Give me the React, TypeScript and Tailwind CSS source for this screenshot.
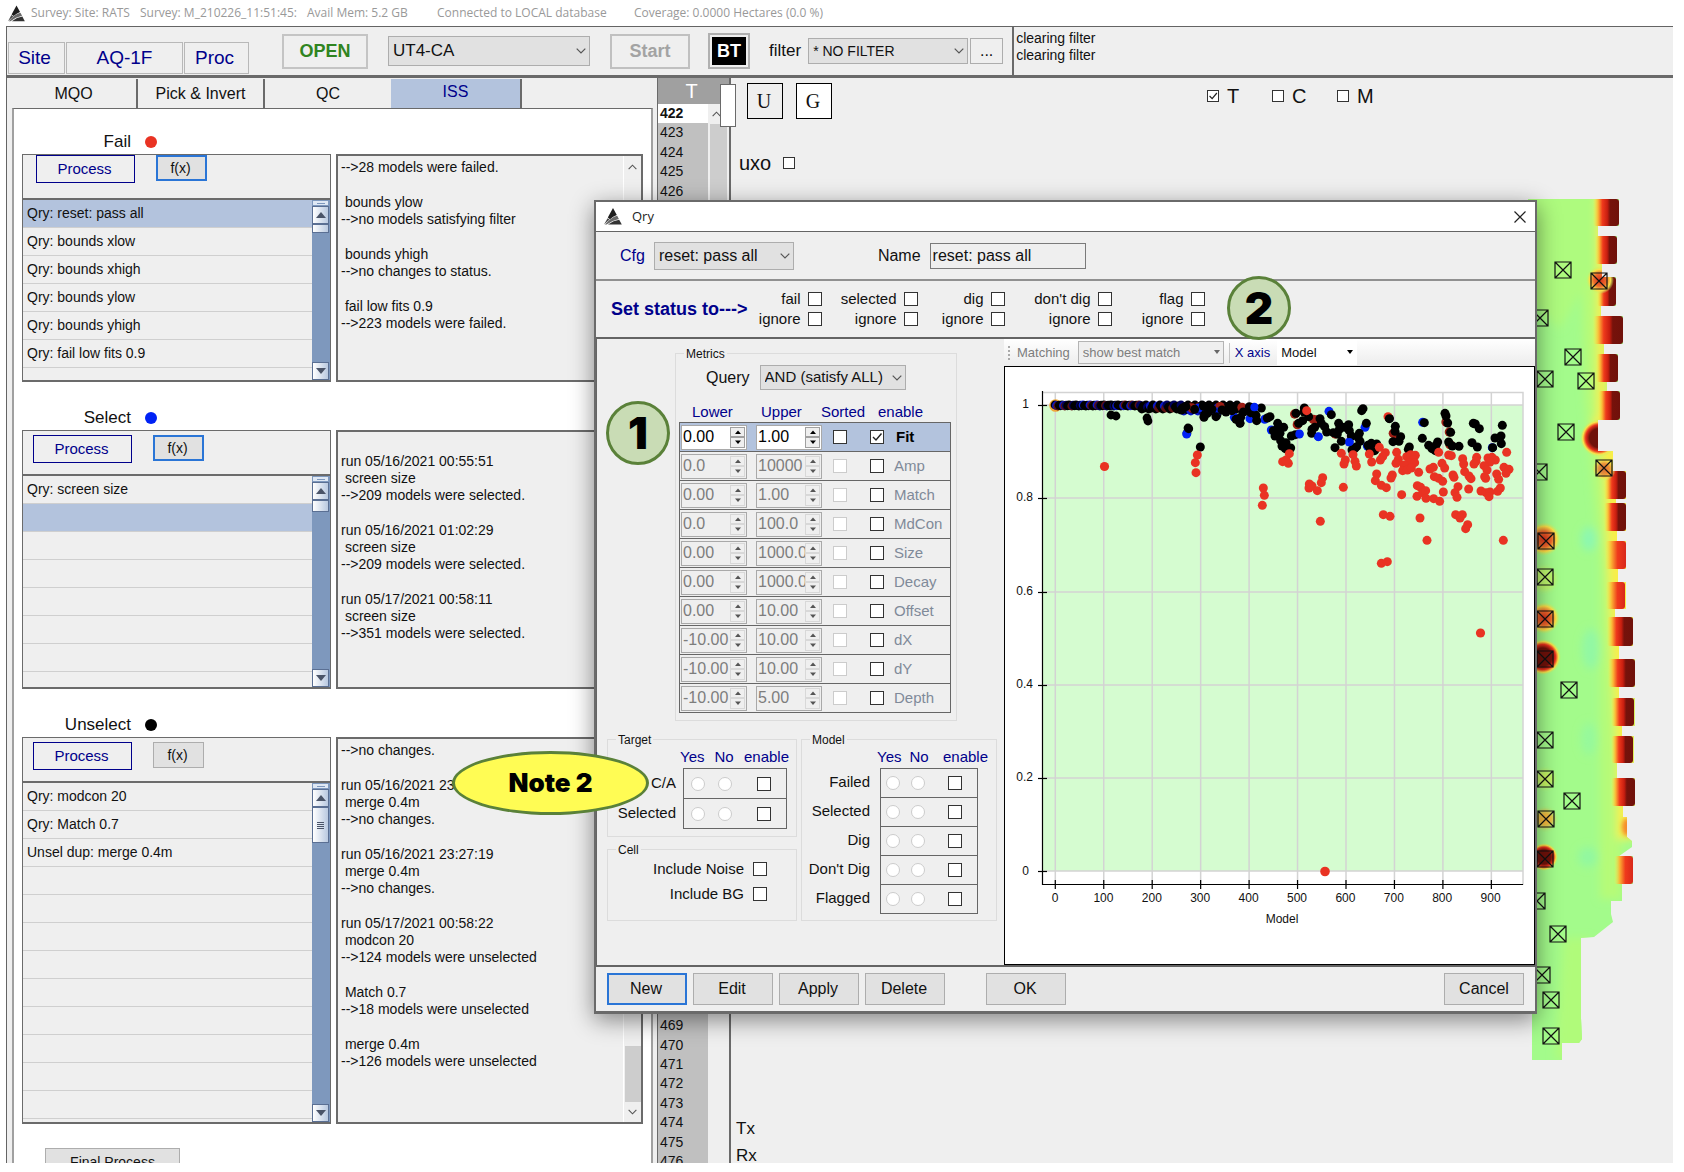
import { type ReactNode } from 'react';

interface QueryPanelProps {
  title: string;
  dotClass: string;
  heightClass: string;
  headerClass: string;
  fxClass: string;
  rows: string[];
  selected: number;
  thumbClass: string;
  grip?: boolean;
  log: string[];
  logTop?: boolean;
  logBottom?: boolean;
}

const failLog = [
  '-->28 models were failed.',
  '',
  ' bounds ylow',
  '-->no models satisfying filter',
  '',
  ' bounds yhigh',
  '-->no changes to status.',
  '',
  ' fail low fits 0.9',
  '-->223 models were failed.',
];

const selectLog = [
  '',
  'run 05/16/2021 00:55:51',
  ' screen size',
  '-->209 models were selected.',
  '',
  'run 05/16/2021 01:02:29',
  ' screen size',
  '-->209 models were selected.',
  '',
  'run 05/17/2021 00:58:11',
  ' screen size',
  '-->351 models were selected.',
];

const unselectLog = [
  '-->no changes.',
  '',
  'run 05/16/2021 23:21:04',
  ' merge 0.4m',
  '-->no changes.',
  '',
  'run 05/16/2021 23:27:19',
  ' merge 0.4m',
  '-->no changes.',
  '',
  'run 05/17/2021 00:58:22',
  ' modcon 20',
  '-->124 models were unselected',
  '',
  ' Match 0.7',
  '-->18 models were unselected',
  '',
  ' merge 0.4m',
  '-->126 models were unselected',
];

const panels: QueryPanelProps[] = [
  {
    title: 'Fail',
    dotClass: 'bg-[#e93323]',
    heightClass: 'h-[228px]',
    headerClass: 'pl-[13px]',
    fxClass: 'border-2 border-[#2a75d6]',
    rows: ['Qry: reset: pass all', 'Qry: bounds xlow', 'Qry: bounds xhigh', 'Qry: bounds ylow', 'Qry: bounds yhigh', 'Qry: fail low fits 0.9', ''],
    selected: 0,
    thumbClass: 'h-[9px]',
    log: failLog,
    logTop: true,
  },
  {
    title: 'Select',
    dotClass: 'bg-[#0022f5]',
    heightClass: 'h-[259px]',
    headerClass: 'pl-[10px] pt-1',
    fxClass: 'border-2 border-[#2a75d6]',
    rows: ['Qry: screen size', '', '', '', '', '', '', ''],
    selected: 1,
    thumbClass: 'h-3',
    log: selectLog,
  },
  {
    title: 'Unselect',
    dotClass: 'bg-black',
    heightClass: 'h-[387px]',
    headerClass: 'pl-[10px] pt-1',
    fxClass: 'border border-[#adadad]',
    rows: ['Qry: modcon 20', 'Qry: Match 0.7', 'Unsel dup: merge 0.4m', '', '', '', '', '', '', '', '', '', ''],
    selected: -1,
    thumbClass: 'h-9',
    grip: true,
    log: unselectLog,
    logBottom: true,
  },
];

const metrics = [
  { name: 'Fit', lower: '0.00', upper: '1.00', on: true },
  { name: 'Amp', lower: '0.0', upper: '10000', on: false },
  { name: 'Match', lower: '0.00', upper: '1.00', on: false },
  { name: 'MdCon', lower: '0.0', upper: '100.0', on: false },
  { name: 'Size', lower: '0.00', upper: '1000.0', on: false },
  { name: 'Decay', lower: '0.00', upper: '1000.0', on: false },
  { name: 'Offset', lower: '0.00', upper: '10.00', on: false },
  { name: 'dX', lower: '-10.00', upper: '10.00', on: false },
  { name: 'dY', lower: '-10.00', upper: '10.00', on: false },
  { name: 'Depth', lower: '-10.00', upper: '5.00', on: false },
];

const channels = Array.from({ length: 55 }, (_, i) => 422 + i);

// Scatter points, three units to a pixel
const redPoints = [
  [52, 225], [46, 248], [48, 278], [250, 324], [253, 346], [247, 376], [328, 221], [308, 245], [325, 250], [318, 240],
  [388, 312], [387, 324], [396, 318], [412, 332], [424, 308], [428, 293], [421, 424], [380, 92], [484, 220], [496, 240],
  [492, 252], [490, 322], [519, 224], [525, 244], [529, 258], [568, 222], [575, 246], [598, 202], [590, 282], [586, 302],
  [616, 218], [608, 230], [601, 240], [604, 316], [619, 323], [610, 404], [630, 409], [604, 550], [622, 545], [624, 110],
  [637, 285], [633, 294], [650, 217], [655, 238], [648, 250], [665, 344], [680, 230], [692, 224], [706, 226], [700, 240],
  [688, 248], [704, 248], [672, 255], [668, 272], [682, 270], [694, 264], [716, 277], [712, 317], [722, 322], [711, 349],
  [728, 338], [737, 332], [738, 355], [720, 414], [741, 481], [776, 217], [750, 267], [760, 262], [763, 290], [776, 295],
  [788, 304], [786, 250], [794, 264], [761, 356], [779, 364], [790, 336], [806, 225], [814, 227], [819, 285], [822, 292],
  [834, 320], [825, 338], [831, 352], [827, 404], [847, 404], [840, 414], [863, 434], [857, 446], [848, 236], [851, 252],
  [854, 275], [867, 288], [873, 296], [866, 327], [890, 232], [888, 244], [882, 252], [924, 234], [936, 232], [946, 240],
  [930, 246], [912, 257], [921, 270], [914, 290], [917, 295], [903, 333], [918, 338], [930, 336], [927, 350], [950, 282],
  [956, 298], [961, 324], [953, 334], [980, 217], [972, 262], [987, 268], [978, 280], [970, 481],
];

const bluePoints = [
  [20, 162], [223, 82], [210, 116], [178, 122], [254, 118], [274, 150], [358, 162], [415, 170], [447, 94], [555, 142],
  [508, 186], [728, 127], [937, 203], [56, 84], [110, 96], [163, 112], [562, 198],
];

const darkRedPoints = [
  [36, 84], [120, 80], [186, 82], [200, 92], [344, 102], [352, 134], [400, 118], [412, 120], [466, 162], [640, 160],
  [658, 172], [582, 196], [590, 200], [798, 126], [808, 156], [810, 194],
];

const blackPoints = [
  [26, 146], [61, 201], [4, 90], [18, 80], [44, 88], [70, 78], [72, 112], [82, 100], [96, 88], [108, 110], [126, 90],
  [138, 96], [152, 78], [156, 92], [168, 118], [182, 112], [180, 130], [190, 96], [208, 80], [212, 98], [230, 122],
  [228, 106], [244, 84], [262, 114], [270, 110], [280, 152], [293, 130], [290, 150], [285, 168], [300, 160], [311, 142],
  [302, 182], [306, 198], [318, 188], [316, 206], [332, 204], [334, 168], [346, 164], [348, 100], [356, 130], [368, 122],
  [373, 84], [372, 96], [386, 110], [396, 148], [395, 160], [404, 142], [420, 116], [424, 130], [434, 140], [440, 156],
  [454, 104], [465, 203], [460, 158], [472, 162], [476, 130], [478, 148], [484, 184], [494, 142], [506, 134], [508, 152],
  [514, 168], [516, 210], [524, 206], [530, 200], [538, 160], [534, 172], [540, 184], [549, 86], [545, 92], [559, 130],
  [564, 196], [570, 206], [574, 190], [578, 204], [584, 212], [590, 192], [628, 115], [646, 139], [645, 154], [639, 185],
  [662, 170], [657, 184], [688, 201], [685, 208], [733, 128], [727, 175], [746, 196], [756, 206], [766, 212], [768, 196],
  [773, 186], [795, 100], [798, 108], [803, 129], [812, 157], [806, 186], [817, 198], [837, 199], [880, 130], [886, 132],
  [898, 146], [876, 188], [892, 201], [938, 203], [945, 174], [963, 168], [964, 191], [967, 136],
];

// The crowded run of near-perfect fits along the top of the chart
const bandColors = ['#000', '#000', '#00005e', '#000', '#5e1010', '#000', '#0a18c8', '#000'];
const bandPoints = Array.from({ length: 132 }, (_, i) => {
  const spread = i < 62 ? 1 : i < 90 ? 4 : 6;
  return {
    x: 1055 + i * 1.4,
    y: 405 + ((i * 7) % 5) * 0.25 * spread,
    color: bandColors[(i * 5 + (i % 3)) % bandColors.length],
  };
});
const bandOutliers = [
  [1111, 415], [1116, 416], [1147, 418], [1148, 421], [1188, 428], [1187, 433], [1204, 416], [1217, 415], [1240, 423],
];

const targetMarks = [
  [1563, 271], [1599, 282], [1540, 319], [1573, 358], [1545, 380], [1586, 382], [1566, 433], [1539, 473], [1604, 469],
  [1546, 542], [1545, 578], [1545, 620], [1545, 660], [1569, 691], [1545, 741], [1545, 780], [1572, 802], [1546, 820],
  [1545, 860], [1537, 902], [1558, 935], [1542, 976], [1551, 1001], [1551, 1037],
];

const edgeBlobs = [
  [1601, 200, 18, 27], [1603, 237, 14, 28], [1605, 278, 11, 29], [1601, 317, 22, 28], [1604, 355, 14, 28],
  [1606, 392, 14, 29], [1612, 472, 14, 28], [1612, 504, 14, 28], [1615, 618, 18, 29], [1616, 660, 19, 28],
  [1619, 699, 15, 28], [1619, 737, 14, 27], [1619, 779, 16, 28],
];
const warmBlobs = [
  [1613, 542, 13, 28], [1614, 583, 11, 27], [1622, 857, 11, 28],
];

const Logo = ({ className }: { className: string }) => (
  <svg viewBox="0 0 18 17" className={className} aria-hidden="true">
    <path d="M9 0 L12.8 7 Q9 8.4 6 11.2 L3.8 9.6 Z" fill="#1e1e1e" />
    <path d="M3.6 10.2 L5.6 11.6 Q3 13.8 0 16.6 Z" fill="#4a4a4a" />
    <path d="M13.2 7.7 L14.9 11 Q8 12.4 2.6 16.6 H0.9 Q7 9.2 13.2 7.7 Z" fill="#6a6a6a" />
    <path d="M15.2 11.8 L17.8 16.6 H4 Q9.5 12.6 15.2 11.8 Z" fill="#333" />
  </svg>
);

const Chevron = ({ className }: { className: string }) => (
  <svg viewBox="0 0 10 6" className={className} aria-hidden="true">
    <path d="M0.7 0.7 L5 5 L9.3 0.7" fill="none" stroke="#555" strokeWidth="1.2" />
  </svg>
);

interface DropDownProps {
  label: string;
  value: string;
  className: string;
  boxClass: string;
}

const DropDown = ({ label, value, className, boxClass }: DropDownProps) => (
  <div className={`relative ${boxClass}`}>
    <select
      aria-label={label}
      className={`h-full w-full appearance-none border border-[#adadad] bg-[#e1e1e1] pr-5 pl-1 ${className}`}
    >
      <option>{value}</option>
    </select>
    <Chevron className="pointer-events-none absolute top-1/2 right-1 h-[6px] w-[10px] -translate-y-1/2" />
  </div>
);

interface TickProps {
  label: string;
  id?: string;
  checked?: boolean;
  disabled?: boolean;
  sizeClass?: string;
}

const Tick = ({ label, id, checked, disabled, sizeClass = 'size-[14px]' }: TickProps) => (
  <span className={`relative block shrink-0 ${sizeClass}`}>
    <input
      id={id}
      type="checkbox"
      aria-label={label}
      defaultChecked={checked}
      disabled={disabled}
      className="peer block h-full w-full appearance-none border border-[#333] bg-white disabled:border-[#ccc]"
    />
    <svg viewBox="0 0 14 14" className="pointer-events-none absolute inset-0 hidden h-full w-full peer-checked:block" aria-hidden="true">
      <path d="M3 7 L6 10 L11.5 3.5" fill="none" stroke="#222" strokeWidth="1.4" />
    </svg>
  </span>
);

const Radio = ({ name, label }: { name: string; label: string }) => (
  <input
    type="radio"
    name={name}
    aria-label={label}
    disabled
    className="block size-[14px] shrink-0 appearance-none rounded-full border border-[#ccc] bg-white"
  />
);

const Spinner = ({ label, value, on }: { label: string; value: string; on: boolean }) => (
  <div className={`flex h-[25px] w-[66px] border border-[#a9a9a9] p-px ${on ? 'bg-white' : 'bg-[#efefef]'}`}>
    <input
      aria-label={label}
      defaultValue={value}
      disabled={!on}
      className="w-[47px] min-w-0 overflow-hidden bg-transparent text-base leading-5 text-black disabled:text-[#7d7d7d]"
    />
    <span className="flex w-[15px] flex-col">
      {['M2 5 L5 1.5 L8 5 Z', 'M2 1.5 L5 5 L8 1.5 Z'].map((d, i) => (
        <button
          key={d}
          type="button"
          aria-label={`${label} ${i === 0 ? 'up' : 'down'}`}
          disabled={!on}
          className={`flex flex-1 items-center justify-center border ${on ? 'border-[#a0a0a0] bg-[#efefef]' : 'border-[#d8d8d8]'}`}
        >
          <svg viewBox="0 0 10 6" className="h-[6px] w-[10px]" aria-hidden="true">
            <path d={d} fill={on ? '#000' : '#555'} />
          </svg>
        </button>
      ))}
    </span>
  </div>
);

const ScrollButton = ({ down }: { down?: boolean }) => (
  <button
    type="button"
    aria-label={down ? 'Scroll down' : 'Scroll up'}
    className="flex h-[18px] w-full shrink-0 items-center justify-center border border-[#5a6f93] bg-linear-to-r from-white to-[#b9c9e0]"
  >
    <svg viewBox="0 0 10 6" className="h-[6px] w-[10px]" aria-hidden="true">
      <path d={down ? 'M0 0 H10 L5 6 Z' : 'M0 6 H10 L5 0 Z'} fill="#4a5468" />
    </svg>
  </button>
);

const QueryPanel = ({ title, dotClass, heightClass, headerClass, fxClass, rows, selected, thumbClass, grip, log, logTop, logBottom }: QueryPanelProps) => (
  <section className="mb-6">
    <div className="flex h-6 items-center">
      <h2 className="w-[109px] text-right text-[17px]">{title}</h2>
      <span className={`ml-[14px] size-3 rounded-full ${dotClass}`} />
    </div>
    <div className={`flex gap-[5px] ${heightClass}`}>
      <div className="flex w-[309px] flex-col border border-b-2 border-[#6b6b6b] bg-[#efefef]">
        <div className={`flex h-[43px] shrink-0 items-start ${headerClass}`}>
          <button type="button" className="h-[28px] w-[99px] border border-[#00008b] pr-[2px] text-[15px] text-[#00008b]">
            Process
          </button>
          <button type="button" className={`ml-[21px] h-[26px] w-[51px] bg-[#e1e1e1] pr-[2px] text-sm leading-5 ${fxClass}`}>
            f(x)
          </button>
        </div>
        <div className="flex min-h-0 flex-1 border-t-2 border-[#6b6b6b]">
          <ul className="min-w-0 flex-1 overflow-hidden">
            {rows.map((row, i) => (
              <li
                key={i}
                className={`h-[28px] border-b border-[#cfcfcf] pl-1 text-sm leading-[27px] ${i === selected ? 'bg-[#b3c3dd]' : ''}`}
              >
                {row}
              </li>
            ))}
          </ul>
          <div className="flex w-[18px] flex-col bg-[#7e98bd] pr-px">
            <div className="flex h-[6px] items-center justify-center border border-[#7e98bd] bg-[#dfe8f4]">
              <span className="h-px w-2 bg-[#7e98bd]" />
            </div>
            <ScrollButton />
            <div className={`flex flex-col items-center justify-center gap-px border border-[#5a6f93] bg-linear-to-r from-white to-[#b9c9e0] ${thumbClass}`}>
              {grip && [0, 1, 2, 3].map((n) => <span key={n} className="h-px w-[7px] bg-[#4a5468]" />)}
            </div>
            <div className="flex-1" />
            <ScrollButton down />
          </div>
        </div>
      </div>
      <div className="flex w-[307px] border-2 border-[#6b6b6b] bg-[#efefef]">
        <div className="flex-1 pt-[3px] pl-[3px] text-sm whitespace-pre">
          {log.map((line, i) => (
            <p key={i} className={line ? 'leading-[17px]' : 'h-[18px]'}>
              {line}
            </p>
          ))}
        </div>
        <div className="flex w-[18px] flex-col items-center border-l border-white">
          {logTop && <Chevron className="mt-2 h-[6px] w-[9px] rotate-180" />}
          <div className="flex-1" />
          {logBottom && <div className="h-[56px] w-4 bg-[#cdcdcd]" />}
          {logBottom && <Chevron className="my-[7px] h-[6px] w-[9px]" />}
        </div>
      </div>
    </div>
  </section>
);

const FitChart = () => (
  <svg viewBox="1005 367 530 597" className="block h-[597px] w-[530px]" fontFamily="Liberation Sans, Arial, sans-serif" fontSize="12">
    <rect x="1042" y="405" width="481" height="466" fill="#d5fcd0" />
    <g stroke="#d3d3d3" strokeWidth="1.5">
      <path d="M1042 392.5 H1523 V885" fill="none" />
      {[405, 498, 592, 685, 778, 871].map((y) => (
        <path key={y} d={`M1042 ${y} H1523`} />
      ))}
      {[0, 1, 2, 3, 4, 5, 6, 7, 8, 9].map((n) => (
        <path key={n} d={`M${1055.3 + n * 48.45} 392 V885`} />
      ))}
    </g>
    <g stroke="#000" strokeWidth="1.2" fill="none">
      <path d="M1042.5 391 V884.5 H1523" />
      {[405, 498, 592, 685, 778, 871].map((y) => (
        <path key={y} d={`M1038 ${y + 0.5} H1047`} />
      ))}
      {[0, 1, 2, 3, 4, 5, 6, 7, 8, 9].map((n) => (
        <path key={n} d={`M${1055.3 + n * 48.45} 880 V889`} />
      ))}
    </g>
    <g textAnchor="end" fill="#111">
      {['1', '0.8', '0.6', '0.4', '0.2', '0'].map((t, i) => (
        <text key={t} x={t.length === 1 ? 1029 : 1033} y={408 + i * 93.3}>
          {t}
        </text>
      ))}
    </g>
    <g textAnchor="middle" fill="#111">
      {[0, 1, 2, 3, 4, 5, 6, 7, 8, 9].map((n) => (
        <text key={n} x={1055 + n * 48.4} y="902">
          {n * 100}
        </text>
      ))}
      <text x="1282" y="923">Model</text>
    </g>
    <circle cx="1055.5" cy="405.5" r="6.3" fill="#f0a838" />
    {bandPoints.map((p, i) => (
      <circle key={i} cx={p.x} cy={p.y} r="4.4" fill={p.color} />
    ))}
    {bandOutliers.map(([x, y]) => (
      <circle key={`${x}-${y}`} cx={x} cy={y} r="4.4" />
    ))}
    <circle cx="1104.5" cy="466.5" r="4.6" fill="#e93323" />
    <g transform="translate(1180 380) scale(0.33333)">
      {darkRedPoints.map(([x, y]) => (
        <circle key={`${x}-${y}`} cx={x} cy={y} r="14" fill="#9c1d14" />
      ))}
      {bluePoints.map(([x, y]) => (
        <circle key={`${x}-${y}`} cx={x} cy={y} r="13.5" fill="#0022f5" />
      ))}
      {blackPoints.map(([x, y]) => (
        <circle key={`${x}-${y}`} cx={x} cy={y} r="13.5" />
      ))}
      {[[223, 82], [358, 162], [415, 170], [508, 186]].map(([x, y]) => (
        <circle key={`${x}-${y}`} cx={x} cy={y} r="12" fill="#0022f5" />
      ))}
      {redPoints.map(([x, y]) => (
        <circle key={`${x}-${y}`} cx={x} cy={y} r="13.5" fill="#e93323" />
      ))}
      <circle cx="628" cy="116" r="13.5" />
    </g>
    <circle cx="1480.5" cy="633" r="4.6" fill="#e93323" />
    <circle cx="1325" cy="871.5" r="4.8" fill="#e93323" />
  </svg>
);

const HeatMap = () => (
  <svg viewBox="1528 200 112 864" className="block h-[864px] w-[112px]" aria-hidden="true">
    <defs>
      <filter id="soft" x="-50%" y="-50%" width="200%" height="200%">
        <feGaussianBlur stdDeviation="4" />
      </filter>
      <filter id="edge" x="-50%" y="-50%" width="200%" height="200%">
        <feGaussianBlur stdDeviation="2" />
      </filter>
      <clipPath id="field">
        <path d="M1528 200 H1619 V227 H1598 V237 H1617 V265 H1602 V278 H1616 V307 H1601 V317 H1623 V345 H1604 V355 H1618 V383 H1607 V392 H1620 V421 H1598 V452 H1613 V472 H1626 V500 H1616 V504 H1626 V532 H1617 V542 H1626 V570 H1618 V583 H1626 V610 H1615 V618 H1633 V647 H1619 V660 H1635 V688 H1619 V699 H1635 V727 H1622 V737 H1634 V764 H1617 V779 H1635 V807 H1623 V818 H1627 V838 L1632 842 V848 L1619 857 H1633 V885 H1622 V902 H1611 V915 L1613 923 L1594 938 L1581 939 V1019 L1582 1040 L1579 1044 H1562 V1061 H1532 V1010 H1528 Z" />
      </clipPath>
      <linearGradient id="blob" x1="0" x2="1" y1="0" y2="0">
        <stop offset="0" stopColor="#f8ee48" stopOpacity="0" />
        <stop offset="0.2" stopColor="#fbb034" />
        <stop offset="0.36" stopColor="#ef3a1c" />
        <stop offset="0.55" stopColor="#c81e10" />
        <stop offset="0.66" stopColor="#76120b" />
        <stop offset="1" stopColor="#70110a" />
      </linearGradient>
      <linearGradient id="warm" x1="0" x2="1" y1="0" y2="0">
        <stop offset="0" stopColor="#f8ee48" stopOpacity="0" />
        <stop offset="0.3" stopColor="#fbb034" />
        <stop offset="0.6" stopColor="#ef3a1c" />
        <stop offset="1" stopColor="#d8281a" />
      </linearGradient>
      <radialGradient id="hot">
        <stop offset="0" stopColor="#d6301c" />
        <stop offset="0.45" stopColor="#ee6a2c" />
        <stop offset="0.75" stopColor="#fbe24a" />
        <stop offset="1" stopColor="#b4f870" stopOpacity="0" />
      </radialGradient>
      <radialGradient id="peak">
        <stop offset="0.5" stopColor="#70110a" />
        <stop offset="0.7" stopColor="#e8301c" />
        <stop offset="0.85" stopColor="#fbe24a" />
        <stop offset="1" stopColor="#b4f870" stopOpacity="0" />
      </radialGradient>
    </defs>
    <g clipPath="url(#field)">
      <rect x="1528" y="200" width="112" height="864" fill="#a3fb8b" />
      <g filter="url(#soft)">
        <path d="M1580 195 H1610 V420 L1622 620 V900 H1600 V560 L1585 400 Z" fill="#b6fb78" />
        <path d="M1528 195 H1600 V260 L1560 330 L1528 300 Z" fill="#aefb7e" />
        <path d="M1564 939 H1590 V1060 H1555 Z" fill="#b0fb7a" />
        <ellipse cx="1589" cy="540" rx="8" ry="12" fill="#8cf8b0" />
        <ellipse cx="1591" cy="650" rx="9" ry="20" fill="#92f8a4" />
        <ellipse cx="1589" cy="740" rx="8" ry="16" fill="#96f99c" />
        <ellipse cx="1588" cy="858" rx="10" ry="10" fill="#92f8a0" />
        <path d="M1597 190 V420 H1592 L1604 470 L1610 620 L1617 760 V840 H1636 V460 L1606 420 V190 Z" fill="#f8ee48" />
      </g>
      {edgeBlobs.map(([x, y, w, h]) => (
        <rect key={y} x={x - 8} y={y} width={w + 8} height={h} rx="3" fill="url(#blob)" />
      ))}
      {warmBlobs.map(([x, y, w, h]) => (
        <rect key={y} x={x - 8} y={y} width={w + 8} height={h} rx="3" fill="url(#warm)" />
      ))}
      <ellipse cx="1627" cy="828" rx="5" ry="9" fill="#f58a2a" filter="url(#edge)" />
      <circle cx="1599" cy="439" r="19" fill="url(#peak)" />
      <circle cx="1600" cy="281" r="14" fill="url(#hot)" />
      <circle cx="1604" cy="470" r="12" fill="url(#hot)" opacity="0.7" />
      <circle cx="1544" cy="540" r="17" fill="url(#hot)" />
      <circle cx="1544" cy="580" r="12" fill="#d0f45a" opacity="0.6" filter="url(#edge)" />
      <circle cx="1544" cy="619" r="16" fill="url(#hot)" />
      <circle cx="1543" cy="658" r="18" fill="url(#peak)" />
      <circle cx="1545" cy="780" r="9" fill="#d8f050" opacity="0.7" filter="url(#edge)" />
      <circle cx="1545" cy="820" r="9" fill="#f4b83c" filter="url(#edge)" />
      <circle cx="1544" cy="858" r="14" fill="url(#peak)" />
    </g>
    <g fill="none" stroke="#111" strokeWidth="1.2">
      {targetMarks.map(([x, y]) => (
        <path key={`${x}-${y}`} d={`M${x - 8} ${y - 8} h16 v16 h-16 Z l16 16 m0 -16 l-16 16`} />
      ))}
    </g>
  </svg>
);

const statusColumns = [
  { name: 'fail', colClass: 'w-[74px]' },
  { name: 'selected', colClass: 'w-[96px]' },
  { name: 'dig', colClass: 'w-[87px]' },
  { name: "don't dig", colClass: 'w-[107px]' },
  { name: 'flag', colClass: 'w-[93px]' },
];

interface GroupProps {
  legend: string;
  className: string;
  children: ReactNode;
}

const Group = ({ legend, className, children }: GroupProps) => (
  <fieldset className={`relative border border-[#dcdcdc] ${className}`}>
    <legend className="absolute -top-2 left-2 bg-[#efefef] px-[2px] text-xs leading-4">{legend}</legend>
    {children}
  </fieldset>
);

interface FlagTableProps {
  rows: string[];
  labelClass: string;
  rowClass: string;
  gapClass: string;
  boxClass: string;
  headClass: string;
  group: string;
}

const FlagTable = ({ rows, labelClass, rowClass, gapClass, boxClass, headClass, group }: FlagTableProps) => (
  <div className="pt-[6px] text-[15px]">
    <div className={`flex h-[22px] items-center text-[#00008b] ${headClass}`}>
      <span>Yes</span>
      <span>No</span>
      <span className="ml-auto">enable</span>
    </div>
    <div className="flex">
      <div className={`flex flex-col text-right ${labelClass}`}>
        {rows.map((row) => (
          <label key={row} htmlFor={`${group}-${row}`} className={`flex items-center justify-end ${rowClass}`}>
            {row}
          </label>
        ))}
      </div>
      <div className={`flex flex-col border-x border-t border-[#666] ${boxClass}`}>
        {rows.map((row) => (
          <div key={row} className={`flex items-center border-b border-[#666] ${gapClass} ${rowClass}`}>
            <Radio name={`${group}-${row}`} label={`${row} yes`} />
            <Radio name={`${group}-${row}`} label={`${row} no`} />
            <span className="pl-3">
              <Tick id={`${group}-${row}`} label={`${row} enable`} />
            </span>
          </div>
        ))}
      </div>
    </div>
  </div>
);

const QueryDialog = () => (
  <div
    role="dialog"
    aria-label="Qry"
    className="absolute top-[200px] left-[594px] w-[943px] border-2 border-b-[3px] border-[#6a6a6a] bg-[#efefef] shadow-[0_6px_22px_rgba(0,0,0,0.45)]"
  >
    <div className="flex h-[30px] items-center border-b border-[#646464] bg-white pl-2">
      <Logo className="h-[17px] w-[18px]" />
      <span className="ml-[10px] font-['Open_Sans',sans-serif] text-[13px] text-[#222]">Qry</span>
      <button type="button" aria-label="Close" className="mr-[9px] ml-auto">
        <svg viewBox="0 0 12 12" className="size-3">
          <path d="M0.5 0.5 L11.5 11.5 M11.5 0.5 L0.5 11.5" stroke="#222" strokeWidth="1.2" />
        </svg>
      </button>
    </div>

    <div className="flex h-[49px] items-center border-b-2 border-[#909090] text-base">
      <label className="ml-6 text-[#00008b]">Cfg</label>
      <DropDown label="Cfg" value="reset: pass all" boxClass="ml-[9px] h-[28px] w-[140px]" className="text-base" />
      <label htmlFor="name" className="ml-[84px]">
        Name
      </label>
      <input id="name" defaultValue="reset: pass all" className="ml-[9px] h-[26px] w-[156px] border border-[#7a7a7a] bg-[#efefef] pl-[2px]" />
    </div>

    <div className="flex h-[58px] items-center border-b-2 border-[#646464] text-[15px]">
      <span className="ml-[15px] text-lg font-bold whitespace-nowrap text-[#00008b]">Set status to---&gt;</span>
      {statusColumns.map(({ name, colClass }) => (
        <div key={name} className={`flex shrink-0 flex-col ${colClass}`}>
          {[name, 'ignore'].map((text) => (
            <label key={text} className="flex h-5 items-center justify-end gap-[7px]">
              {text}
              <Tick label={`${name} ${text}`} />
            </label>
          ))}
        </div>
      ))}
    </div>

    <div className="flex h-[628px] border-b-2 border-[#646464]">
      <div className="w-[408px] shrink-0 border-l border-[#646464] pt-[14px]">
        <Group legend="Metrics" className="ml-[78px] h-[368px] w-[282px]">
          <div className="flex items-center pt-[11px] pl-[30px]">
            <label className="text-base">Query</label>
            <DropDown label="Query" value="AND (satisfy ALL)" boxClass="ml-[10px] h-[25px] w-[146px]" className="text-[15px]" />
          </div>
          <div className="mt-3 flex h-[20px] items-center pl-[16px] text-[15px] text-[#00008b]">
            <span className="w-[69px]">Lower</span>
            <span className="w-[60px]">Upper</span>
            <span className="w-[57px]">Sorted</span>
            <span>enable</span>
          </div>
          <div className="ml-[3px] w-[272px] border border-[#666] border-b-0">
            {metrics.map(({ name, lower, upper, on }) => (
              <div key={name} className={`flex h-[29px] items-center border-b border-[#666] pl-px ${on ? 'bg-[#b3c3dd]' : ''}`}>
                <Spinner label={`${name} lower`} value={lower} on={on} />
                <span className="w-[9px]" />
                <Spinner label={`${name} upper`} value={upper} on={on} />
                <span className="ml-[11px]">
                  <Tick label={`${name} sorted`} disabled={!on} />
                </span>
                <span className="ml-[23px]">
                  <Tick id={`metric-${name}`} label={`${name} enable`} checked={on} />
                </span>
                <label
                  htmlFor={`metric-${name}`}
                  className={`ml-[10px] text-[15px] ${on ? 'pl-[2px] font-bold text-black' : 'text-[#7f8a99]'}`}
                >
                  {name}
                </label>
              </div>
            ))}
          </div>
        </Group>

        <div className="mt-[18px] flex gap-[4px] pl-[10px]">
          <div className="w-[190px]">
            <Group legend="Target" className="h-[98px]">
              <FlagTable
                group="target"
                rows={['C/A', 'Selected']}
                headClass="gap-[10px] pr-[7px] pl-[72px]"
                labelClass="w-[68px]"
                rowClass="h-[30px]"
                gapClass="gap-[13px]"
                boxClass="ml-[7px] w-[104px] [&>div]:pl-[7px]"
              />
            </Group>
            <Group legend="Cell" className="mt-3 h-[72px]">
              <div className="flex flex-col gap-[7px] pt-[10px] pr-[29px] text-[15px] leading-[18px]">
                {['Include Noise', 'Include BG'].map((text) => (
                  <label key={text} className="flex items-center justify-end gap-[9px]">
                    {text}
                    <Tick label={text} />
                  </label>
                ))}
              </div>
            </Group>
          </div>
          <Group legend="Model" className="h-[182px] w-[196px]">
            <FlagTable
              group="model"
              rows={['Failed', 'Selected', 'Dig', "Don't Dig", 'Flagged']}
              headClass="gap-[8px] pr-2 pl-[75px]"
              labelClass="w-[68px]"
              rowClass="h-[29px]"
              gapClass="gap-[11px]"
              boxClass="ml-[10px] w-[98px] [&>div]:pl-[5px]"
            />
          </Group>
        </div>
      </div>

      <div className="flex min-w-0 flex-1 flex-col">
        <div className="flex h-[27px] shrink-0 items-center bg-linear-to-b from-white to-[#ececec] text-[13px]">
          <span className="ml-1 h-[14px] w-[2px] border-l-2 border-dotted border-[#aaa]" />
          <label className="ml-[7px] text-[#7d7d7d]">Matching</label>
          <div className="relative ml-[8px] h-[23px] w-[146px]">
            <select
              aria-label="Matching"
              disabled
              className="h-full w-full appearance-none border border-[#b4b4b4] bg-[#efefef] pl-1 text-[#7d7d7d] opacity-100"
            >
              <option>show best match</option>
            </select>
            <svg viewBox="0 0 6 4" className="pointer-events-none absolute top-[9px] right-1 h-1 w-[6px]" aria-hidden="true">
              <path d="M0 0 H6 L3 4 Z" fill="#666" />
            </svg>
          </div>
          <span className="ml-[5px] h-5 w-px bg-[#c4c4c4]" />
          <label className="ml-[5px] text-[#00008b]">X axis</label>
          <div className="relative ml-[7px] h-[25px] w-[80px] bg-white">
            <select aria-label="X axis" className="h-full w-full appearance-none pl-1">
              <option>Model</option>
            </select>
            <svg viewBox="0 0 6 4" className="pointer-events-none absolute top-[10px] right-1 h-1 w-[6px]" aria-hidden="true">
              <path d="M0 0 H6 L3 4 Z" fill="#000" />
            </svg>
          </div>
        </div>
        <div className="min-h-0 flex-1 overflow-hidden border border-black bg-white">
          <FitChart />
        </div>
      </div>
    </div>

    <div className="flex h-[44px] items-center gap-[6px] pl-[11px] text-base">
      {['New', 'Edit', 'Apply', 'Delete'].map((text) => (
        <button
          key={text}
          type="button"
          className={`h-8 w-[80px] bg-[#e1e1e1] pr-[2px] ${text === 'New' ? 'border-2 border-[#2a75d6]' : 'border border-[#adadad]'}`}
        >
          {text}
        </button>
      ))}
      <button type="button" className="ml-[35px] h-8 w-[80px] border border-[#adadad] bg-[#e1e1e1] pr-[2px]">
        OK
      </button>
      <button type="button" className="mr-[11px] ml-auto h-8 w-[80px] border border-[#adadad] bg-[#e1e1e1]">
        Cancel
      </button>
    </div>
  </div>
);

const Toolbar = () => (
  <div className="flex h-[51px] shrink-0 items-center border-b-[3px] border-[#6a6a6a] bg-[#efefef]">
    <div className="ml-px flex gap-px self-end pb-px text-[19px] text-[#00008b]">
      <button type="button" className="h-8 w-[57px] border border-[#b8b8b8] pr-1">Site</button>
      <button type="button" className="h-8 w-[117px] border border-[#b8b8b8]">AQ-1F</button>
      <button type="button" className="h-8 w-[65px] border border-[#b8b8b8] pr-1">Proc</button>
    </div>
    <button type="button" className="ml-[33px] h-[35px] w-[86px] border-2 border-[#c4c4c4] text-lg leading-none font-bold text-[#2f8421]">
      OPEN
    </button>
    <DropDown label="Instrument" value="UT4-CA" boxClass="ml-5 h-[30px] w-[202px]" className="text-[17px]" />
    <button type="button" disabled className="ml-5 h-[35px] w-[80px] border-2 border-[#c0c0c0] text-lg leading-none font-bold text-[#a3a3a3]">
      Start
    </button>
    <button type="button" className="ml-[18px] h-9 w-[42px] border-2 border-[#b0b0b0] p-[2px]">
      <span className="flex h-full w-full items-center justify-center bg-black text-lg font-bold text-white">BT</span>
    </button>
    <label htmlFor="filter-more" className="ml-[19px] text-[17px]">filter</label>
    <DropDown label="filter" value="* NO FILTER" boxClass="ml-[7px] h-[26px] w-[160px]" className="text-sm" />
    <button id="filter-more" type="button" className="ml-[2px] h-[26px] w-[33px] border border-[#adadad] text-base leading-5">
      ...
    </button>
    <div className="ml-[9px] h-full flex-1 border-l-2 border-[#6a6a6a] pt-[3px] pl-[2px] text-sm leading-[17px]">
      <p>clearing filter</p>
      <p>clearing filter</p>
    </div>
  </div>
);

const App = () => (
  <div className="relative flex h-screen flex-col overflow-hidden bg-white pr-[11px] pb-[9px] pl-[6px] font-['Liberation_Sans',Arial,sans-serif] text-[#111]">
    <header className="flex h-[26px] shrink-0 items-center pl-[2px] font-['Open_Sans',sans-serif] text-xs whitespace-pre text-[#999]">
      <Logo className="h-[17px] w-[17px]" />
      <span className="ml-[6px] w-[109px]">Survey: Site: RATS</span>
      <span className="w-[167px]">Survey: M_210226_11:51:45:</span>
      <span className="w-[130px]">Avail Mem: 5.2 GB</span>
      <span className="w-[197px]">Connected to LOCAL database</span>
      <span>Coverage: 0.0000 Hectares (0.0 %)</span>
    </header>

    <div className="flex min-h-0 flex-1 flex-col border-t border-l border-[#646464] bg-[#efefef]">
      <Toolbar />
      <main className="flex min-h-0 flex-1">
        <div className="flex w-[650px] shrink-0 flex-col">
          <nav className="flex h-[30px] shrink-0 pt-px pl-1 text-base">
            <button type="button" className="w-[127px] border-r-2 border-[#6a6a6a]">MQO</button>
            <button type="button" className="w-[127px] border-r-2 border-[#6a6a6a]">Pick &amp; Invert</button>
            <button type="button" className="w-[126px]">QC</button>
            <button type="button" className="w-[131px] border-r-2 border-[#6a6a6a] bg-[#b3c3dd] pb-1 text-[#00008b]">ISS</button>
          </nav>
          <div className="mr-1 ml-[5px] min-h-0 flex-1 overflow-hidden border-x-2 border-t border-x-[#a0a0a0] border-t-[#6a6a6a] bg-white pt-[21px] pl-2">
            {panels.map((panel) => (
              <QueryPanel key={panel.title} {...panel} />
            ))}
            <button type="button" className="ml-[23px] h-7 w-[135px] border border-[#adadad] bg-[#e1e1e1] text-sm">
              Final Process
            </button>
          </div>
        </div>

        <div className="flex w-[74px] shrink-0 flex-col overflow-hidden border-r-2 border-l border-[#6a6a6a]">
          <div className="h-[26px] shrink-0 bg-[#a0a0a0] pr-1 text-center text-xl leading-[26px] text-white">T</div>
          <div className="-mb-2 flex min-h-0 flex-1">
            <ul className="flex w-[50px] flex-col bg-[#c0c0c0] text-sm leading-[19px]">
              {channels.map((n) => (
                <li key={n} className={`min-h-0 flex-1 pl-[2px] ${n === 422 ? 'bg-white font-bold' : ''}`}>
                  {n}
                </li>
              ))}
            </ul>
            <div className="flex flex-1 flex-col pl-[2px]">
              <Chevron className="mx-[2px] my-[7px] h-[6px] w-[9px] rotate-180" />
              <div className="h-[400px] w-[17px] bg-[#cdcdcd]" />
            </div>
          </div>
        </div>

        <div className="relative min-w-0 flex-1">
          <div className="absolute top-[6px] -left-[11px] h-[43px] w-4 border border-[#6a6a6a] bg-white" />
          <div className="flex items-start pt-[5px] pl-4">
            <div className="flex gap-[13px] font-['Liberation_Serif',serif] text-xl">
              <button type="button" className="size-9 border border-black pr-[2px]">U</button>
              <button type="button" className="size-9 border border-black bg-white pr-[2px]">G</button>
            </div>
            <div className="ml-[375px] flex pt-px text-xl leading-6">
              {['T', 'C', 'M'].map((text) => (
                <label key={text} className="flex w-[65px] items-center gap-2">
                  <Tick label={text} checked={text === 'T'} sizeClass="size-3" />
                  {text}
                </label>
              ))}
            </div>
          </div>
          <label className="mt-8 flex w-max items-center gap-3 pl-2 text-xl leading-6">
            uxo
            <Tick label="uxo" sizeClass="size-3" />
          </label>
          <div className="absolute top-[121px] left-[797px]">
            <HeatMap />
          </div>
          <div className="absolute bottom-[-6px] left-[5px] text-[17px] leading-[27px]">
            <p>Tx</p>
            <p>Rx</p>
          </div>
        </div>
      </main>
    </div>

    <QueryDialog />

    {/* numbered callouts pinned on top of everything */}
    <div className="absolute top-[401px] left-[606px] flex size-16 items-center justify-center rounded-full border-[3px] border-[#5a8139] bg-[#c9dcb5] font-['Inter',sans-serif] text-[44px] leading-none font-black text-black">
      1
    </div>
    <div className="absolute top-[276px] left-[1227px] flex size-16 items-center justify-center rounded-full border-[3px] border-[#5a8139] bg-[#c9dcb5] font-['Inter',sans-serif] text-[44px] leading-none font-black text-black">
      2
    </div>
    <div className="absolute top-[751px] left-[452px] flex h-16 w-[197px] items-center justify-center rounded-[50%] border-[3px] border-[#5a8139] bg-[#fffc54] font-['Inter',sans-serif] text-[26px] leading-none font-black text-black">
      Note 2
    </div>
  </div>
);

export default App;
